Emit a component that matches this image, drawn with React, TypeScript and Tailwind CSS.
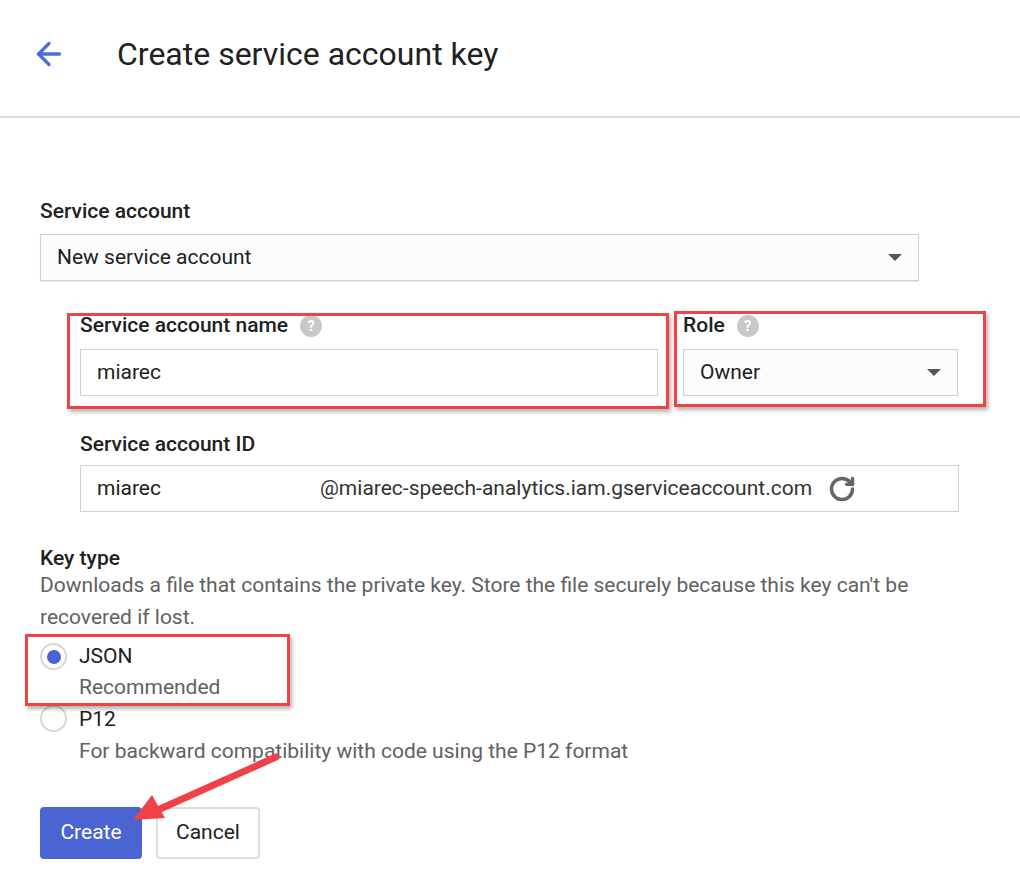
import { ArrowLeft, RotateCw } from 'lucide-react';

function Help() {
  return (
    <span className="ml-3 inline-flex h-[22px] w-[22px] items-center justify-center rounded-full bg-[#c8c8c8] text-[15px] font-bold text-white">
      ?
    </span>
  );
}

function Caret() {
  return <span className="h-0 w-0 border-x-[7px] border-t-[7px] border-x-transparent border-t-[#555]" />;
}

export default function App() {
  return (
    <div className="relative h-[892px] w-[1020px] overflow-hidden bg-white font-[Roboto,sans-serif] text-[21px] text-[#212121]">
      <header className="flex h-[118px] items-center border-b-2 border-[#dcdcdc] pb-2">
        <ArrowLeft className="ml-[31px] h-9 w-9 text-[#4a6fd8]" strokeWidth={2.2} />
        <h1 className="ml-[50px] text-[32px] text-[#212121]">Create service account key</h1>
      </header>

      <main className="pl-10 pt-[80px]">
        <div className="font-medium leading-[26px]">Service account</div>
        <div className="mt-[10px] flex h-[47px] w-[879px] items-center justify-between border border-[#d0d0d0] bg-[#fcfcfc] pl-4 pr-4 shadow-[0_1px_1px_rgba(0,0,0,0.08)]">
          <span>New service account</span>
          <Caret />
        </div>

        <div className="ml-10 mt-[32px] flex gap-[25px]">
          <div>
            <div className="flex h-[26px] items-center font-medium">
              Service account name <Help />
            </div>
            <div className="mt-[10px] flex h-[47px] w-[578px] items-center border border-[#d0d0d0] pl-4">miarec</div>
          </div>
          <div>
            <div className="flex h-[26px] items-center font-medium">
              Role <Help />
            </div>
            <div className="mt-[10px] flex h-[47px] w-[275px] items-center justify-between border border-[#d0d0d0] bg-[#fcfcfc] px-4">
              <span>Owner</span>
              <Caret />
            </div>
          </div>
        </div>

        <div className="ml-10 mt-[33px]">
          <div className="h-[26px] font-medium">Service account ID</div>
          <div className="mt-[10px] flex h-[47px] w-[879px] items-center border border-[#d0d0d0] pl-4">
            <span className="w-[223px]">miarec</span>
            <span className="text-[#333]">@miarec-speech-analytics.iam.gserviceaccount.com</span>
            <RotateCw className="ml-4 h-7 w-7 text-[#666]" strokeWidth={3} />
          </div>
        </div>

        <div className="mt-[31px] h-[26px] font-medium">Key type</div>
        <p className="w-[900px] leading-[32px] text-[#616161]">
          Downloads a file that contains the private key. Store the file securely because this key can't be recovered if lost.
        </p>

        <div className="mt-[8px]">
          <div className="flex items-start">
            <span className="mt-[2px] flex h-[27px] w-[27px] items-center justify-center rounded-full border-2 border-[#d6d6d6]">
              <span className="h-[14px] w-[14px] rounded-full bg-[#4a63d6]" />
            </span>
            <div className="ml-[12px] leading-[31px]">
              <div>JSON</div>
              <div className="text-[#616161]">Recommended</div>
            </div>
          </div>
          <div className="flex items-start">
            <span className="mt-[2px] h-[27px] w-[27px] rounded-full border-2 border-[#d6d6d6]" />
            <div className="ml-[12px] leading-[32px]">
              <div>P12</div>
              <div className="text-[#616161]">For backward compatibility with code using the P12 format</div>
            </div>
          </div>
        </div>

        <div className="mt-[40px] flex gap-[14px]">
          <button className="h-[52px] w-[102px] rounded-sm bg-[#4a64d4] text-white">Create</button>
          <button className="h-[52px] w-[104px] rounded-sm border-2 border-[#ddd] bg-white">Cancel</button>
        </div>
      </main>

      {/* annotations */}
      <div className="absolute left-[67px] top-[313px] h-[96px] w-[602px] border-[3px] border-[#ef4444] shadow-[2px_3px_4px_rgba(0,0,0,0.3)]" />
      <div className="absolute left-[674px] top-[311px] h-[96px] w-[312px] border-[3px] border-[#ef4444] shadow-[2px_3px_4px_rgba(0,0,0,0.3)]" />
      <div className="absolute left-[25px] top-[634px] h-[72px] w-[265px] border-[3px] border-[#ef4444] shadow-[2px_3px_4px_rgba(0,0,0,0.3)]" />
      <svg className="absolute left-0 top-0" width="1020" height="892">
        <line x1="276" y1="757" x2="160" y2="809" stroke="#f04048" strokeWidth="7" strokeLinecap="round" />
        <polygon points="133,820 152,795 165,818" fill="#f04048" />
      </svg>
    </div>
  );
}
